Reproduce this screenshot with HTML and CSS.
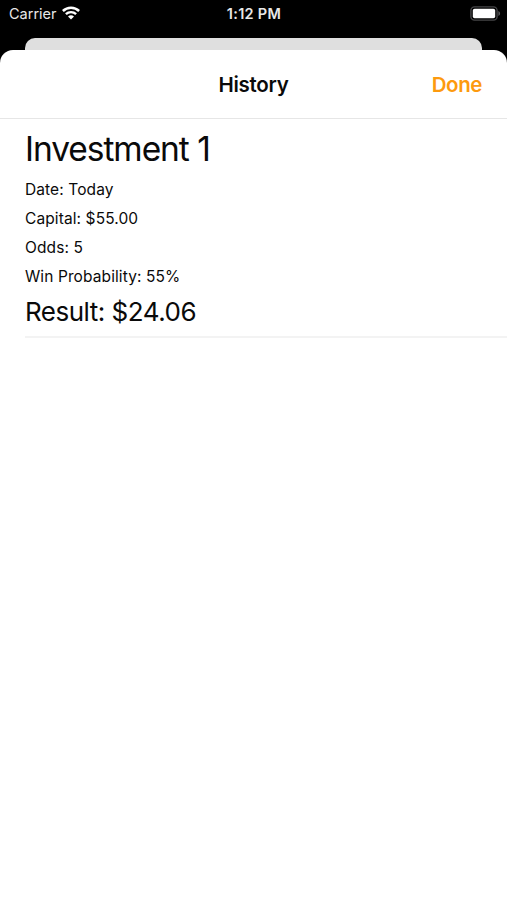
FILE: index.html
```html
<!DOCTYPE html>
<html lang="en">
<head>
    <meta charset="UTF-8">
    <meta name="viewport" content="width=device-width, initial-scale=1.0">
    <title>History</title>
    <link rel="stylesheet" href="styles.css">
</head>
<body>
    <div class="status-bar">
        <div class="carrier">
            <span>Carrier</span>
            <svg class="wifi" viewBox="0 0 18 14" width="18" height="14">
                <path d="M.9 5a11.6 11.6 0 0 1 16.2 0" fill="none" stroke="#fff" stroke-width="2.5"/>
                <path d="M3.9 8.2a7.3 7.3 0 0 1 10.2 0" fill="none" stroke="#fff" stroke-width="2.4"/>
                <path d="M9 13.6 6 10.6a4.3 4.3 0 0 1 6 0z" fill="#fff"/>
            </svg>
        </div>
        <div class="time">1:12 PM</div>
        <div class="power">
            <svg class="battery" viewBox="0 0 31 15" width="31" height="15">
                <rect x="0.9" y="0.9" width="26.2" height="13.2" rx="3.6" fill="none" stroke="#454547" stroke-width="1.4"/>
                <rect x="2.8" y="2.8" width="22.4" height="9.4" rx="1.8" fill="#fff"/>
                <path d="M28.4 5v5c1-.4 1.7-1.4 1.7-2.5S29.4 5.4 28.4 5z" fill="#5a5a5c"/>
            </svg>
        </div>
    </div>

    <div class="back-card"></div>

    <div class="sheet">
        <div class="nav-bar">
            <h1>History</h1>
            <button class="done">Done</button>
        </div>

        <div class="entry">
            <h2>Investment 1</h2>
            <p class="date">Date: Today</p>
            <p class="capital">Capital: $55.00</p>
            <p class="odds">Odds: 5</p>
            <p class="probability">Win Probability: 55%</p>
            <p class="result">Result: $24.06</p>
        </div>
    </div>
</body>
</html>
```
FILE: styles.css
```css
* {
    box-sizing: border-box;
}

body {
    font-family: Inter, "Liberation Sans", sans-serif;
    background-color: #000;
    margin: 0;
    height: 100vh;
    display: flex;
    flex-direction: column;
    color: #0a0a0a;
    overflow: hidden;
}

/* Status bar */
.status-bar {
    display: grid;
    grid-template-columns: 1fr auto 1fr;
    align-items: center;
    height: 27px;
    margin-bottom: 11px;
    padding: 0 6px 0 9px;
    color: #e8e8e8;
    font-size: 14.5px;
}

.carrier {
    display: flex;
    align-items: center;
    gap: 5px;
}

.wifi,
.battery {
    display: block;
}

.wifi {
    margin-bottom: 2px;
}

.time {
    margin-right: 2px;
    font-weight: 600;
    letter-spacing: 0.3px;
}

.power {
    display: flex;
    justify-content: flex-end;
}

/* Top edge of the screen behind the sheet */
.back-card {
    flex: none;
    height: 12px;
    margin: 0 25px;
    background-color: #dfdfdf;
    border-radius: 10px 10px 0 0;
}

/* Sheet */
.sheet {
    flex: 1;
    background-color: #fff;
    border-radius: 13px 13px 0 0;
}

.nav-bar {
    display: grid;
    grid-template-columns: 1fr auto 1fr;
    align-items: center;
    height: 69px;
    padding: 0 25px;
    border-bottom: 1px solid #e6e6e6;
}

h1 {
    grid-column: 2;
    margin: 0;
    font-size: 20.5px;
    font-weight: 600;
    letter-spacing: -0.25px;
}

.done {
    justify-self: end;
    padding: 0;
    border: none;
    background: none;
    color: #fd9a0e;
    font-family: inherit;
    font-size: 20.5px;
    font-weight: 600;
    letter-spacing: -0.4px;
    cursor: pointer;
}

.entry {
    margin-left: 25px;
    padding-top: 7px;
    height: 219px;
    border-bottom: 2px solid #f3f3f3;
}

h2 {
    margin: 0 0 3px;
    font-size: 33.5px;
    font-weight: 400;
    letter-spacing: -1.05px;
    line-height: 46px;
}

p {
    margin: 0;
    font-size: 15.5px;
    letter-spacing: 0.1px;
    line-height: 29px;
}

.result {
    font-size: 26px;
    letter-spacing: -0.5px;
    line-height: 41px;
}
```
